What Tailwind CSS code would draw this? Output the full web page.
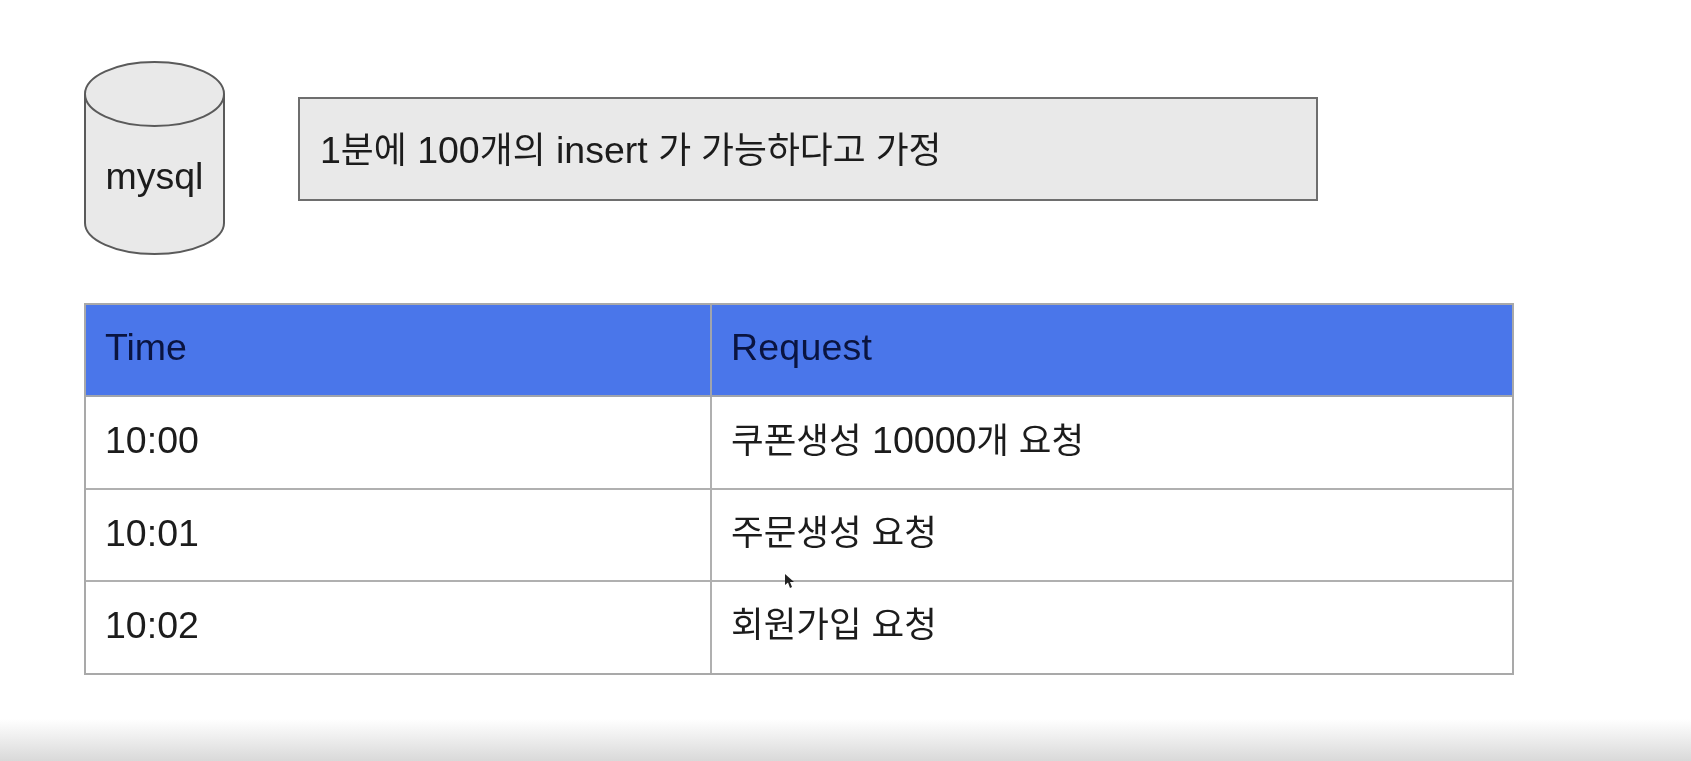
<!DOCTYPE html>
<html lang="ko">
<head>
    <meta charset="UTF-8">
    <title>Insert queue</title>
    <script src="https://cdn.jsdelivr.net/npm/@tailwindcss/browser@4"></script>
</head>
<body class="bg-white h-[761px] w-[1691px] overflow-hidden relative font-['Liberation_Sans','Noto_Sans_CJK_KR',sans-serif] text-[37.5px] text-[#1c1c1c]">

    <div class="blur-[0.5px]">
        <!-- Top: cylinder and note -->
        <div class="flex items-start pt-[61px] pl-[84px]">
            <div class="relative w-[141px] h-[194px] shrink-0">
                <svg class="w-[141px] h-[194px]" viewBox="0 0 141 194" fill="#e9e9e9" stroke="#5a5a5a" stroke-width="2">
                    <path d="M1 33 V162 C1 179 32 193 70.5 193 C109 193 140 179 140 162 V33" />
                    <ellipse cx="70.5" cy="33" rx="69.5" ry="32" />
                </svg>
                <div class="absolute left-0 right-0 top-[93px] text-center leading-[44px]">mysql</div>
            </div>
            <div class="ml-[73px] mt-[36px] w-[1020px] h-[104px] bg-[#e9e9e9] border-2 border-[#6e6e6e] pl-[20px] pt-[29px] leading-[44px]">
                1<span class="text-[35.8px]">분에</span> 100<span class="text-[35.8px]">개의</span> insert <span class="text-[35.8px]">가 가능하다고 가정</span>
            </div>
        </div>

        <!-- Table -->
        <div class="ml-[84px] mt-[48px] w-[1430px] grid grid-cols-[626px_800px] grid-rows-[92px_93px_92px_91px] border-2 border-[#a9a9a9] box-border">
            <div class="bg-[#4a76ea] text-[#0a1440] border-r-2 border-b-2 border-[#a0a4ac] pl-[19px] pt-[20px] leading-[44px]">Time</div>
            <div class="bg-[#4a76ea] text-[#0a1440] border-b-2 border-[#a0a4ac] pl-[19px] pt-[20px] leading-[44px] tracking-[0.2px]">Request</div>

            <div class="border-r-2 border-b-2 border-[#b0b0b0] pl-[19px] pt-[21px] leading-[44px]">10:00</div>
            <div class="border-b-2 border-[#b0b0b0] pl-[19px] pt-[21px] leading-[44px]"><span class="text-[35.5px]">쿠폰생성</span> 10000<span class="text-[35.5px]">개 요청</span></div>

            <div class="border-r-2 border-b-2 border-[#b0b0b0] pl-[19px] pt-[21px] leading-[44px]">10:01</div>
            <div class="border-b-2 border-[#b0b0b0] pl-[19px] pt-[21px] leading-[44px] text-[35.5px]">주문생성 요청</div>

            <div class="border-r-2 border-[#b0b0b0] pl-[19px] pt-[21px] leading-[44px]">10:02</div>
            <div class="pl-[19px] pt-[21px] leading-[44px] text-[35.5px]">회원가입 요청</div>
        </div>
    </div>

    <!-- Mouse cursor -->
    <svg class="absolute left-[785px] top-[574px] w-[10px] h-[16px]" viewBox="0 0 10 16" fill="#222">
        <path d="M0 0 L0 11 L3 8.5 L5 14 L7 13 L5 8 L9 8 Z" />
    </svg>

    <!-- Bottom fade -->
    <div class="absolute left-0 right-0 bottom-0 h-[42px] bg-gradient-to-b from-white to-[#d9d9d9]"></div>

</body>
</html>
